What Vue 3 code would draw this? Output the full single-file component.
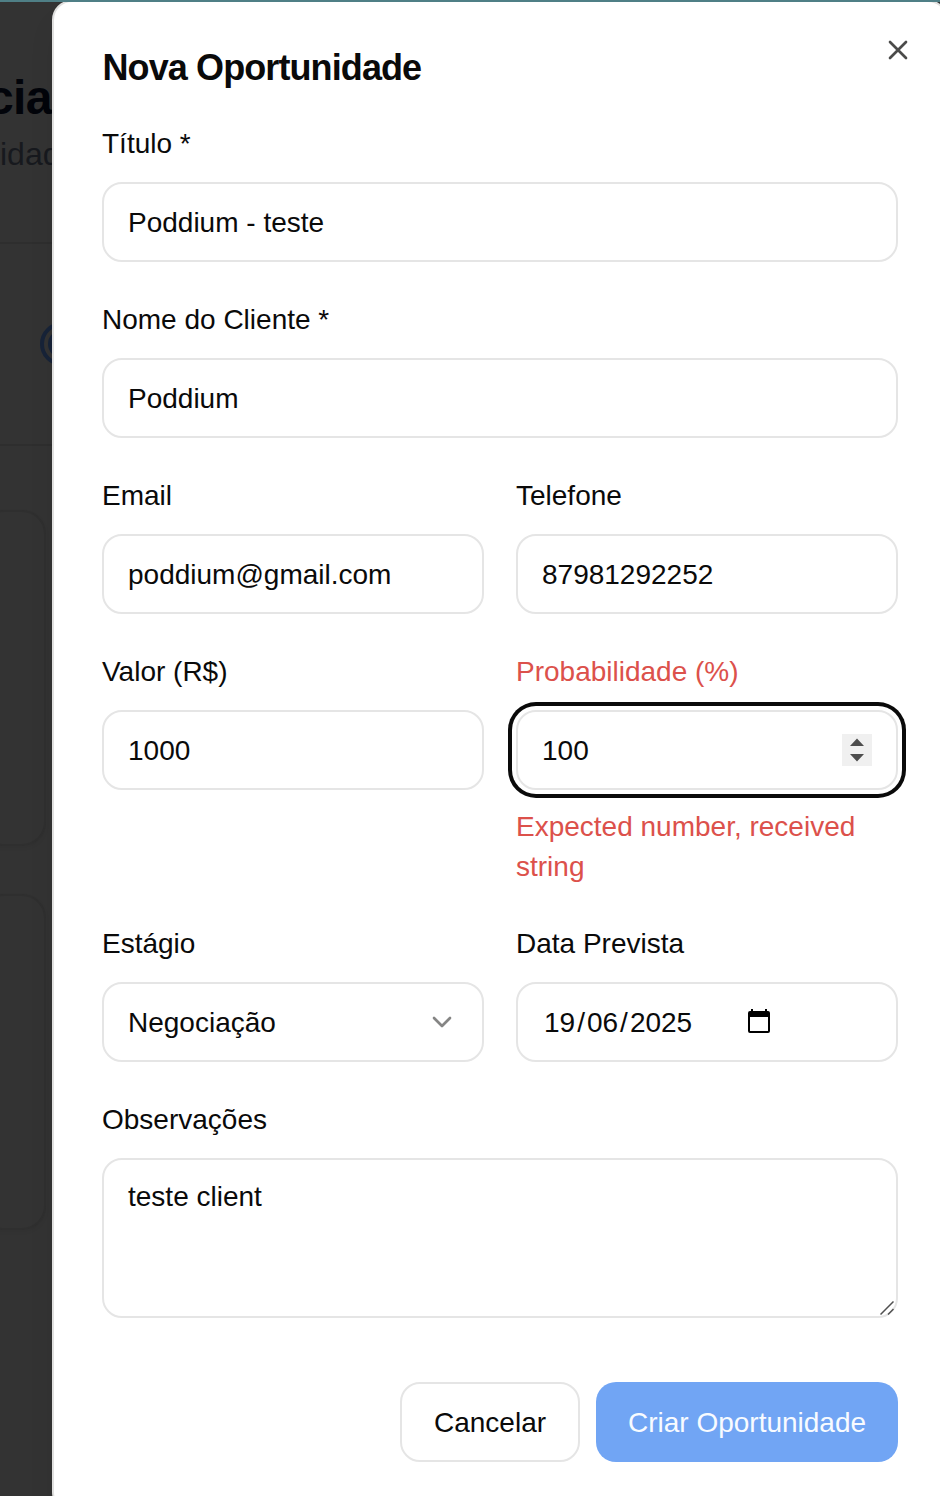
<script setup>
import { ref } from 'vue'

const title = ref('Poddium - teste')
const client = ref('Poddium')
const email = ref('poddium@gmail.com')
const phone = ref('87981292252')
const value = ref('1000')
const probability = ref('100')
const notes = ref('teste client')
</script>

<template>
  <div class="screen">
    <div class="page">
      <header class="page-head">
        <div class="page-title">cia</div>
        <div class="page-sub">idad</div>
      </header>
      <div class="page-stats">
        <svg width="48" height="48" viewBox="0 0 24 24" fill="none" stroke="#172338" stroke-width="2">
          <circle cx="12" cy="12" r="10" /><circle cx="12" cy="12" r="6" /><circle cx="12" cy="12" r="2" />
        </svg>
      </div>
      <div class="page-cards">
        <div class="page-card"></div>
        <div class="page-card"></div>
      </div>
    </div>

    <div class="dialog">
      <h2>Nova Oportunidade</h2>
      <button class="close" aria-label="Fechar">
        <svg width="32" height="32" viewBox="0 0 24 24" fill="none" stroke="#4b4b4a" stroke-width="2" stroke-linecap="round" stroke-linejoin="round">
          <path d="M18 6 6 18M6 6l12 12" />
        </svg>
      </button>

      <form @submit.prevent>
        <div class="field">
          <label>Título *</label>
          <input v-model="title" class="control" type="text" />
        </div>
        <div class="field">
          <label>Nome do Cliente *</label>
          <input v-model="client" class="control" type="text" />
        </div>
        <div class="row">
          <div class="field">
            <label>Email</label>
            <input v-model="email" class="control" type="text" />
          </div>
          <div class="field">
            <label>Telefone</label>
            <input v-model="phone" class="control" type="text" />
          </div>
        </div>
        <div class="row">
          <div class="field">
            <label>Valor (R$)</label>
            <input v-model="value" class="control" type="text" />
          </div>
          <div class="field">
            <label class="error">Probabilidade (%)</label>
            <div class="control focused">
              <span>{{ probability }}</span>
              <svg class="spinner" width="30" height="32" viewBox="0 0 30 32">
                <rect width="30" height="32" fill="#f0f0f0" />
                <path d="M8 12 15 4.500 22 12zM8 20h14l-7 7.500z" fill="#4d4d4d" />
              </svg>
            </div>
            <p class="message error">Expected number, received string</p>
          </div>
        </div>
        <div class="row">
          <div class="field">
            <label>Estágio</label>
            <div class="control select">
              <span>Negociação</span>
              <svg width="32" height="32" viewBox="0 0 24 24" fill="none" stroke="#858584" stroke-width="2" stroke-linecap="round" stroke-linejoin="round">
                <path d="m6 9 6 6 6-6" />
              </svg>
            </div>
          </div>
          <div class="field">
            <label>Data Prevista</label>
            <div class="control date">
              <span>19<i>/</i>06<i>/</i>2025</span>
              <svg width="22" height="24" viewBox="0 0 22 24">
                <path fill="#000" fill-rule="evenodd" d="M3 0h2v2h12V0h2v2h1a2 2 0 0 1 2 2v18a2 2 0 0 1-2 2H2a2 2 0 0 1-2-2V4a2 2 0 0 1 2-2h1zM2 8v14h18V8z" />
              </svg>
            </div>
          </div>
        </div>
        <div class="field">
          <label>Observações</label>
          <div class="area">
            <textarea v-model="notes" class="control"></textarea>
            <svg class="grip" width="14" height="14" viewBox="0 0 14 14" fill="none" stroke="#505050" stroke-width="1.5">
              <path d="M.5 13.5 13.5.5M8 13.5l5.500-5.500" />
            </svg>
          </div>
        </div>
        <div class="actions">
          <button class="cancel" type="button">Cancelar</button>
          <button class="submit" type="submit">Criar Oportunidade</button>
        </div>
      </form>
    </div>
    <div class="topline"></div>
  </div>
</template>

<style>
body { margin: 0; overflow: hidden; }
</style>

<style scoped>
* { box-sizing: border-box; }
.screen {
  position: relative;
  width: 940px;
  height: 1496px;
  overflow: hidden;
  background: #333;
  color: #0a0a0a;
  font: 28px/40px "Liberation Sans", Arial, sans-serif;
}
.topline { position: absolute; left: 0; top: 0; width: 100%; height: 2px; background: #4f7f86; }

.page { width: 100px; }
.page-head { height: 244px; padding-top: 70px; border-bottom: 2px solid #2e2e2e; }
.page-title { margin-left: -13px; font-size: 48px; line-height: 56px; font-weight: 700; letter-spacing: -.6px; color: #02040a; }
.page-sub { font-size: 32px; line-height: 56px; color: #17191e; }
.page-stats { height: 202px; padding: 76px 0 0 38px; border-bottom: 2px solid #2e2e2e; }
.page-stats svg { display: block; }
.page-cards { display: grid; gap: 48px; padding-top: 64px; }
.page-card { width: 66px; height: 336px; margin-left: -20px; border: 2px solid #2f2f2f; border-radius: 24px; box-shadow: 0 2px 4px rgba(0, 0, 0, .05); }

.dialog {
  position: absolute;
  left: 52px;
  top: 0;
  width: 896px;
  height: 1512px;
  padding: 48px;
  border: 2px solid #e0e0df;
  border-radius: 20px;
  background: #fff;
  box-shadow: 0 20px 30px -6px rgba(0, 0, 0, .1), 0 8px 12px -8px rgba(0, 0, 0, .1);
}
h2 { margin: 0 0 32px; padding-left: .5px; font-size: 36px; line-height: 36px; font-weight: 700; letter-spacing: -.9px; }
.close { position: absolute; right: 32px; top: 32px; display: flex; padding: 0; border: 0; background: none; }

form { display: grid; gap: 32px; }
.row { display: grid; grid-template-columns: 1fr 1fr; gap: 32px; align-items: start; }
.field { display: grid; gap: 16px; min-width: 0; }
label { height: 48px; padding-top: 6px; line-height: 40px; white-space: nowrap; }
.error { color: #dc514b; }
.message { margin: 0; padding-top: 1px; margin-bottom: -1px; }
.control {
  display: flex;
  align-items: center;
  width: 100%;
  height: 80px;
  margin: 0;
  padding: 0 24px;
  border: 2px solid #e5e5e5;
  border-radius: 20px;
  outline: none;
  background: #fff;
  color: #0a0a0a;
  font: inherit;
}
input.control { padding-top: 2px; }
.control span { padding-top: 2px; }
.focused { justify-content: space-between; box-shadow: 0 0 0 4px #fff, 0 0 0 8px #0a0a0a; }
.select { justify-content: space-between; }
.date { padding-left: 26px; gap: 56px; }
.date i { margin: 0 2px; font-style: normal; }
.date svg { margin-bottom: 2px; }
.area { position: relative; height: 160px; }
textarea.control { display: block; height: 160px; padding: 17px 24px 15px; resize: none; overflow: hidden; }
.grip { position: absolute; right: 4px; bottom: 3px; }

.actions { display: flex; justify-content: flex-end; gap: 16px; padding-top: 32px; }
.actions button { height: 80px; padding: 2px 0 0; border-radius: 20px; font: inherit; white-space: nowrap; }
.cancel { width: 180px; border: 2px solid #e5e5e5; background: #fff; color: #0a0a0a; }
.submit { width: 302px; border: 0; background: #71a5f4; color: #f8fbff; }
</style>
